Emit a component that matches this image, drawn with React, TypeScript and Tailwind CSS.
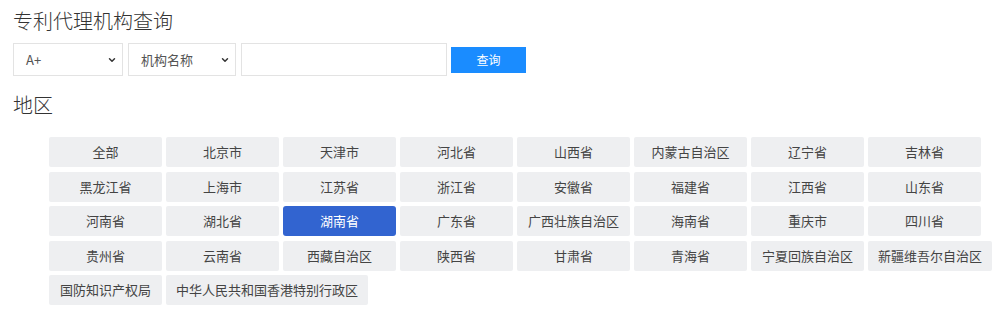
import { ChevronDown } from "lucide-react";

const regions = [
  "全部", "北京市", "天津市", "河北省", "山西省", "内蒙古自治区", "辽宁省", "吉林省",
  "黑龙江省", "上海市", "江苏省", "浙江省", "安徽省", "福建省", "江西省", "山东省",
  "河南省", "湖北省", "湖南省", "广东省", "广西壮族自治区", "海南省", "重庆市", "四川省",
  "贵州省", "云南省", "西藏自治区", "陕西省", "甘肃省", "青海省", "宁夏回族自治区", "新疆维吾尔自治区",
  "国防知识产权局", "中华人民共和国香港特别行政区",
];

const font = { fontFamily: '"Noto Sans CJK SC", "Liberation Sans", sans-serif' };

function FakeSelect({ label, width }: { label: string; width: string }) {
  return (
    <div className={`relative h-[33px] ${width} border border-[#e3e3e3] bg-white flex items-center`}>
      <span className="pl-[12px] text-[13px] text-[#555]">{label}</span>
      <ChevronDown size={10} strokeWidth={3.5} className="absolute right-[5px] top-[11px] text-[#333]" />
    </div>
  );
}

export default function App() {
  const active = "湖南省";

  return (
    <div className="bg-white min-h-[311px] pl-[13px] text-[#333]" style={font}>
      <h1 className="pt-[7px] text-[20px] leading-[28px] font-light text-[#333]">专利代理机构查询</h1>

      {/* search bar */}
      <div className="mt-[8px] flex items-center">
        <FakeSelect label="A+" width="w-[110px]" />
        <div className="w-[5px]" />
        <FakeSelect label="机构名称" width="w-[108px]" />
        <div className="w-[5px]" />
        <input className="h-[33px] w-[206px] border border-[#e3e3e3] outline-none px-2 text-[13px]" />
        <button className="ml-[4px] h-[26px] w-[75px] bg-[#1a8cff] text-white text-[12px] leading-[26px]">
          查询
        </button>
      </div>

      <h2 className="mt-[15px] text-[20px] leading-[28px] font-light">地区</h2>

      {/* region buttons */}
      <div className="mt-[18px] ml-[36px] flex flex-wrap gap-x-[4px] gap-y-[4.5px]">
        {regions.map((r) => (
          <button
            key={r}
            className={
              r === active
                ? "h-[30px] min-w-[113px] px-[10px] rounded-[3px] bg-[#3264d0] text-white text-[13px] whitespace-nowrap"
                : "h-[30px] min-w-[113px] px-[10px] rounded-[2px] bg-[#eeeff1] text-[#444] text-[13px] whitespace-nowrap"
            }
          >
            {r}
          </button>
        ))}
      </div>
    </div>
  );
}
